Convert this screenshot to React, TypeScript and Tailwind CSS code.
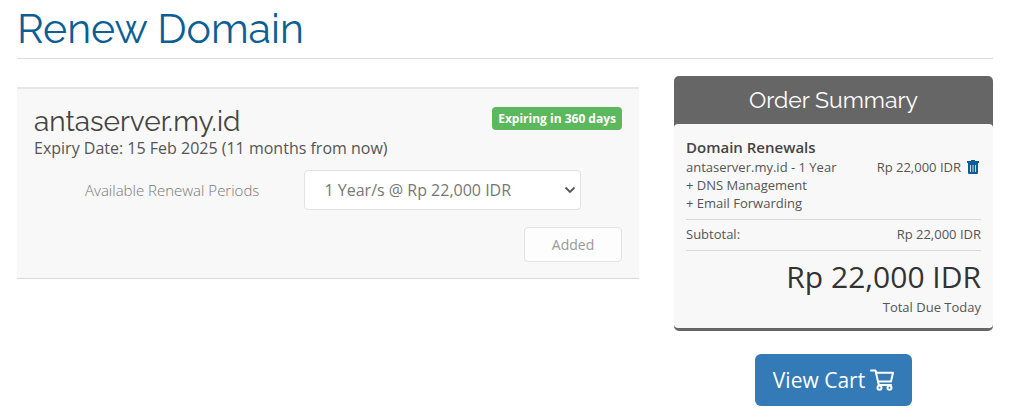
import { useState } from "react";

interface SummaryItem {
  name: string;
  period: string;
  price: string;
  addons: string[];
}

const DOMAIN = {
  name: "antaserver.my.id",
  expiry: "15 Feb 2025 (11 months from now)",
  badge: "Expiring in 360 days",
};

const PERIODS = [
  { value: "1", label: "1 Year/s @ Rp 22,000 IDR" },
];

const ITEMS: SummaryItem[] = [
  {
    name: "antaserver.my.id",
    period: "1 Year",
    price: "Rp 22,000 IDR",
    addons: ["DNS Management", "Email Forwarding"],
  },
];

function TrashIcon() {
  return (
    <svg viewBox="0 0 12 14" className="h-[14px] w-3" fill="currentColor" aria-hidden="true">
      <path d="M4 0h4v1h4v2H0V1h4z" />
      <path
        fillRule="evenodd"
        d="M1 3h10v10a1 1 0 0 1-1 1H2a1 1 0 0 1-1-1zM3.200 5v7h.8V5zM5.600 5v7h.8V5zM8 5v7h.8V5z"
      />
    </svg>
  );
}

function CartIcon() {
  return (
    <svg
      viewBox="0 0 24 22"
      className="h-[22px] w-6"
      fill="none"
      stroke="currentColor"
      strokeWidth="2"
      strokeLinecap="round"
      strokeLinejoin="round"
      aria-hidden="true"
    >
      <path d="M1 1.500h4.500L8.800 16H21" />
      <path d="M6 3.800h17l-2 8.700H8" />
      <circle cx="9.500" cy="18.800" r="2" />
      <circle cx="19.500" cy="18.800" r="2" />
    </svg>
  );
}

function RenewalPanel() {
  const [period, setPeriod] = useState("1");

  return (
    <section className="mt-[11px] min-w-0 border-t-2 border-b border-t-[#e6e6e6] border-b-[#d8d8d8] bg-[#f8f8f8] px-[17px] pt-4 pb-4">
      <div className="flex items-start justify-between">
        <h2 className="font-['Raleway','Lato',sans-serif] text-[28px] leading-[33px] text-[#444]">
          {DOMAIN.name}
        </h2>
        <span className="mt-[2px] rounded bg-[#5cb85c] px-[6px] py-[2px] text-[12px] leading-[19px] font-bold text-white">
          {DOMAIN.badge}
        </span>
      </div>
      <p className="text-[16px] leading-5 text-[#555]">Expiry Date: {DOMAIN.expiry}</p>

      <div className="mt-3 flex items-center">
        <label htmlFor="period" className="w-[46%] pl-[51px] text-[15px] leading-5 font-light text-[#777]">
          Available Renewal Periods
        </label>
        <div className="relative w-[277px]">
          <select
            id="period"
            value={period}
            onChange={(e) => setPeriod(e.target.value)}
            className="h-10 w-full appearance-none rounded border border-[#e2e2e2] bg-white pr-8 pl-[19px] text-[16px] text-[#777]"
          >
            {PERIODS.map((p) => (
              <option key={p.value} value={p.value}>
                {p.label}
              </option>
            ))}
          </select>
          <svg
            viewBox="0 0 12 8"
            className="pointer-events-none absolute top-4 right-[5px] h-2 w-3"
            fill="none"
            stroke="#555"
            strokeWidth="1.8"
            aria-hidden="true"
          >
            <path d="M1.500 1.500 6 6l4.500-4.500" />
          </svg>
        </div>
      </div>

      <div className="mt-[17px] flex justify-end">
        <button
          type="button"
          disabled
          className="h-[35px] w-[98px] rounded border border-[#e2e2e2] bg-[#fdfdfd] text-[14px] text-[#999]"
        >
          Added
        </button>
      </div>
    </section>
  );
}

function OrderSummary() {
  return (
    <aside className="min-w-0">
      <div className="rounded-[5px] border-b-[3px] border-[#666] bg-[#666]">
        <h2 className="py-2 text-center font-['Raleway','Lato',sans-serif] text-[23px] leading-8 text-white">
          Order Summary
        </h2>
        <div className="rounded bg-[#f8f8f8] px-3 pt-3 pb-[11px] text-[13px] text-[#555]">
          <h3 className="text-[15px] leading-[22px] font-semibold text-[#444]">Domain Renewals</h3>
          {ITEMS.map((item) => (
            <div key={item.name} className="leading-[18px]">
              <div className="flex justify-between">
                <span>
                  {item.name} - {item.period}
                </span>
                <span className="flex items-center gap-[6px] pr-[2px]">
                  {item.price}
                  <button type="button" aria-label="Remove" className="text-[#0b5f94]">
                    <TrashIcon />
                  </button>
                </span>
              </div>
              {item.addons.map((addon) => (
                <div key={addon}>+ {addon}</div>
              ))}
            </div>
          ))}
          <div className="mt-[7px] flex justify-between border-y border-[#d8d8d8] pt-1 pb-[6px] leading-5">
            <span>Subtotal:</span>
            <span>Rp 22,000 IDR</span>
          </div>
          <div className="mt-[6px] text-right">
            <div className="text-[30px] leading-10 text-[#333]">Rp 22,000 IDR</div>
            <div className="leading-5">Total Due Today</div>
          </div>
        </div>
      </div>
      <div className="mt-[23px] flex justify-center">
        <a
          href="#"
          className="flex h-[52px] items-center gap-[5px] rounded-md bg-[#337ab7] px-[18px] text-[21px] leading-7 text-white"
        >
          View Cart
          <CartIcon />
        </a>
      </div>
    </aside>
  );
}

export default function App() {
  return (
    <main className="bg-white pr-[31px] pb-3 pl-[17px] font-['Open_Sans',sans-serif]">
      <h1 className="border-b border-[#ddd] pt-[5px] pb-[5px] font-['Raleway','Lato',sans-serif] text-[41px] leading-[48px] text-[#0b5f94]">
        Renew Domain
      </h1>
      <div className="mt-[17px] grid grid-cols-[622fr_319fr] items-start gap-[35px]">
        <RenewalPanel />
        <OrderSummary />
      </div>
    </main>
  );
}
